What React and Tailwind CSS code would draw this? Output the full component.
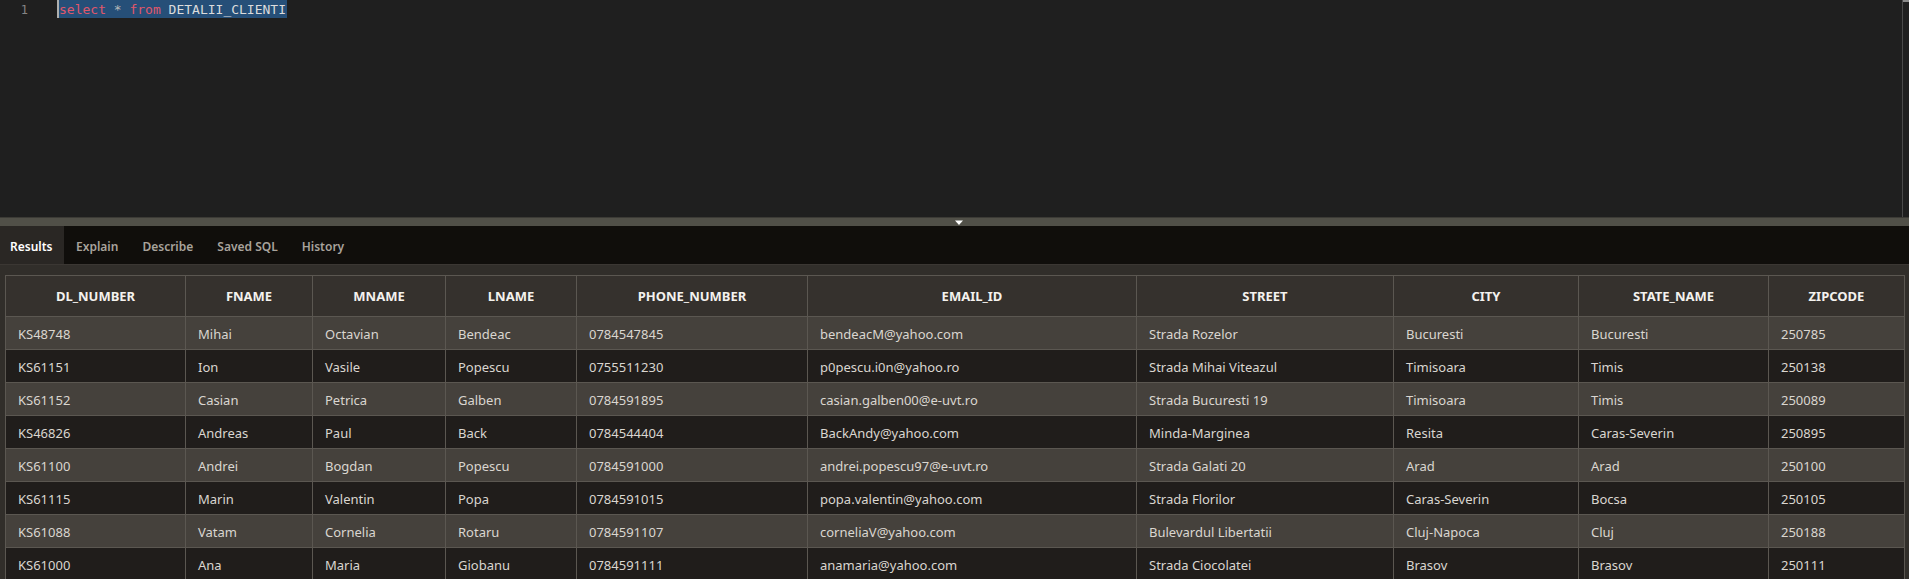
const COLS = [
  { key: 'dl', label: 'DL_NUMBER' },
  { key: 'fname', label: 'FNAME' },
  { key: 'mname', label: 'MNAME' },
  { key: 'lname', label: 'LNAME' },
  { key: 'phone', label: 'PHONE_NUMBER' },
  { key: 'email', label: 'EMAIL_ID' },
  { key: 'street', label: 'STREET' },
  { key: 'city', label: 'CITY' },
  { key: 'state', label: 'STATE_NAME' },
  { key: 'zip', label: 'ZIPCODE' },
];

const ROWS = [
  ['KS48748', 'Mihai', 'Octavian', 'Bendeac', '0784547845', 'bendeacM@yahoo.com', 'Strada Rozelor', 'Bucuresti', 'Bucuresti', '250785'],
  ['KS61151', 'Ion', 'Vasile', 'Popescu', '0755511230', 'p0pescu.i0n@yahoo.ro', 'Strada Mihai Viteazul', 'Timisoara', 'Timis', '250138'],
  ['KS61152', 'Casian', 'Petrica', 'Galben', '0784591895', 'casian.galben00@e-uvt.ro', 'Strada Bucuresti 19', 'Timisoara', 'Timis', '250089'],
  ['KS46826', 'Andreas', 'Paul', 'Back', '0784544404', 'BackAndy@yahoo.com', 'Minda-Marginea', 'Resita', 'Caras-Severin', '250895'],
  ['KS61100', 'Andrei', 'Bogdan', 'Popescu', '0784591000', 'andrei.popescu97@e-uvt.ro', 'Strada Galati 20', 'Arad', 'Arad', '250100'],
  ['KS61115', 'Marin', 'Valentin', 'Popa', '0784591015', 'popa.valentin@yahoo.com', 'Strada Florilor', 'Caras-Severin', 'Bocsa', '250105'],
  ['KS61088', 'Vatam', 'Cornelia', 'Rotaru', '0784591107', 'corneliaV@yahoo.com', 'Bulevardul Libertatii', 'Cluj-Napoca', 'Cluj', '250188'],
  ['KS61000', 'Ana', 'Maria', 'Giobanu', '0784591111', 'anamaria@yahoo.com', 'Strada Ciocolatei', 'Brasov', 'Brasov', '250111'],
];

const TABS = ['Results', 'Explain', 'Describe', 'Saved SQL', 'History'];

const gridCols = 'grid grid-cols-[180px_127px_133px_131px_231px_329px_257px_185px_190px_136px]';

export default function App() {
  return (
    <div className="w-[1909px] h-[579px] overflow-hidden bg-[#312e2a] font-['Noto_Sans',sans-serif]">
      {/* Editor */}
      <div className="h-[217px] bg-[#1f1f1f] flex">
        <div className="w-[57px] pt-[2px] pr-[29px] text-right font-['DejaVu_Sans_Mono',monospace] text-[12px] leading-[16px] text-[#858585]">1</div>
        <div className="flex-1 relative font-['DejaVu_Sans_Mono',monospace] text-[13px] leading-[17px]">
          <span className="inline-block bg-[#264f78] border-l-2 border-[#aeafad] pr-[1px] pt-[1px] whitespace-pre">
            <span className="text-[#e0576b]">select</span>
            <span className="text-[#b8b8b8]"> * </span>
            <span className="text-[#e0576b]">from</span>
            <span className="text-[#dcdcdc]"> DETALII_CLIENTI</span>
          </span>
        </div>
        <div className="w-[7px] border-l border-[#4a4a4a] flex flex-col">
          <div className="h-[2px] bg-[#8a8a8a]" />
        </div>
      </div>

      {/* Splitter */}
      <div className="h-[9px] bg-[#515048] border-t border-[#3c3b36] flex justify-center">
        <svg width="10" height="6" viewBox="0 0 10 6" className="mt-[2px] ml-[8px]">
          <path d="M1 0.5 L9 0.5 L5 5 Z" fill="#ffffff" />
        </svg>
      </div>

      {/* Tabs */}
      <div className="h-[39px] bg-[#100e0b] flex items-stretch border-b border-[#3b3733]">
        {TABS.map((t, i) => (
          <div
            key={t}
            className={`flex items-center pt-[3px] text-[12px] font-semibold ${
              i === 0 ? 'bg-[#2a2724] text-white px-[10px] w-[64px]' : 'text-[#a8a39c] px-[12px]'
            }`}
          >
            {t}
          </div>
        ))}
      </div>

      {/* Results grid */}
      <div className="pt-[10px] pl-[5px]">
        <div className="border-l border-t border-[#5b5751] inline-block">
          <div className={`${gridCols} bg-[#35312d] h-[41px]`}>
            {COLS.map(c => (
              <div key={c.key} className="flex items-center justify-center pt-[2px] border-r border-b border-[#5b5751] text-[13px] font-bold text-[#f4f2ee]">
                {c.label}
              </div>
            ))}
          </div>
          {ROWS.map((r, ri) => (
            <div key={ri} className={`${gridCols} h-[33px] ${ri % 2 === 0 ? 'bg-[#45413c]' : 'bg-[#201d1b]'}`}>
              {r.map((v, ci) => (
                <div key={ci} className="flex items-center px-[12px] pt-[3px] border-r border-b border-[#5b5751] text-[13px] text-[#dad6d0] whitespace-nowrap">
                  {v}
                </div>
              ))}
            </div>
          ))}
        </div>
      </div>
    </div>
  );
}
